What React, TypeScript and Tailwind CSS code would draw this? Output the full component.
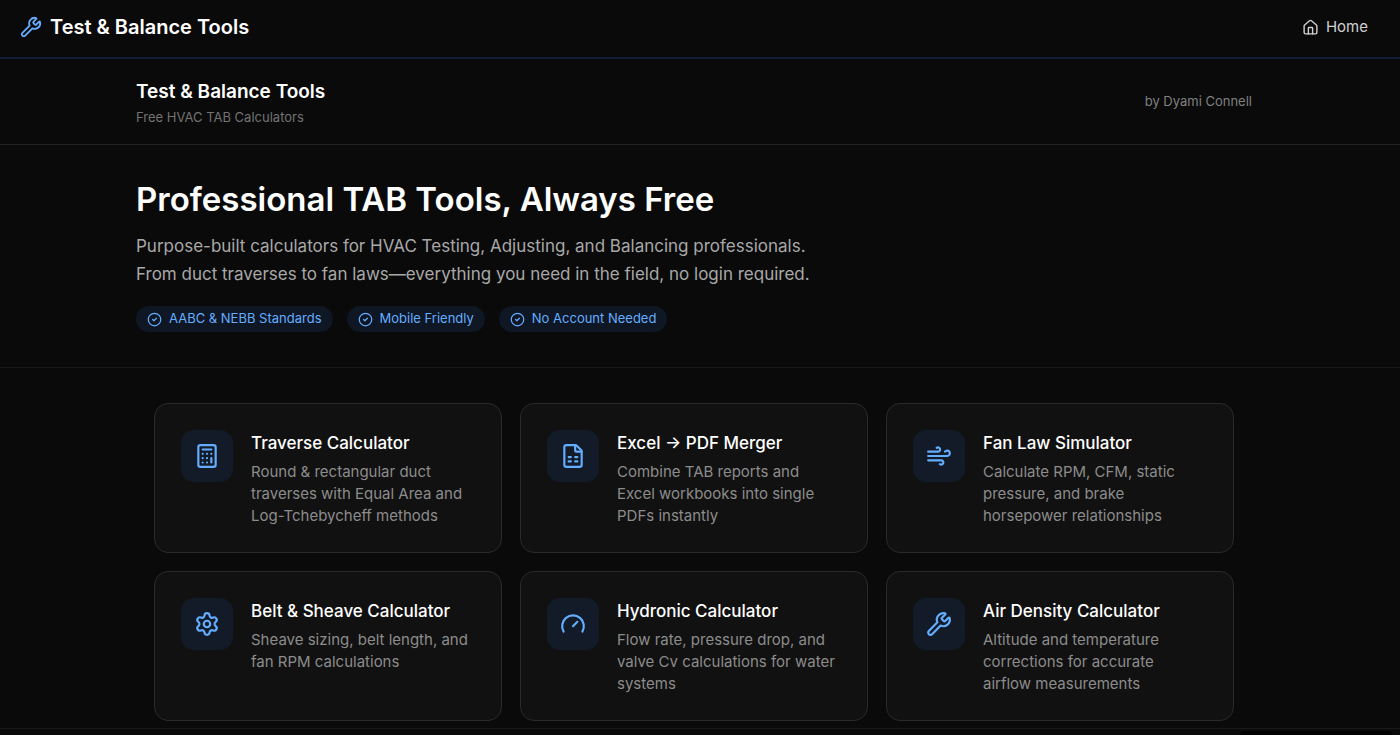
import {
  Calculator,
  CircleCheck,
  FileSpreadsheet,
  Gauge,
  House,
  Settings,
  Wind,
  Wrench,
  type LucideIcon,
} from 'lucide-react';

interface Tool {
  title: string;
  description: string;
  href: string;
  icon: LucideIcon;
}

const tools: Tool[] = [
  {
    title: 'Traverse Calculator',
    description: 'Round & rectangular duct traverses with Equal Area and Log-Tchebycheff methods',
    href: '#traverse',
    icon: Calculator,
  },
  {
    title: 'Excel → PDF Merger',
    description: 'Combine TAB reports and Excel workbooks into single PDFs instantly',
    href: '#merger',
    icon: FileSpreadsheet,
  },
  {
    title: 'Fan Law Simulator',
    description: 'Calculate RPM, CFM, static pressure, and brake horsepower relationships',
    href: '#fan-laws',
    icon: Wind,
  },
  {
    title: 'Belt & Sheave Calculator',
    description: 'Sheave sizing, belt length, and fan RPM calculations',
    href: '#belt-sheave',
    icon: Settings,
  },
  {
    title: 'Hydronic Calculator',
    description: 'Flow rate, pressure drop, and valve Cv calculations for water systems',
    href: '#hydronic',
    icon: Gauge,
  },
  {
    title: 'Air Density Calculator',
    description: 'Altitude and temperature corrections for accurate airflow measurements',
    href: '#air-density',
    icon: Wrench,
  },
];

const highlights = ['AABC & NEBB Standards', 'Mobile Friendly', 'No Account Needed'];

const NavBar = () => (
  <nav className="flex h-[59px] items-center justify-between border-b-2 border-[#121c38] pl-5 pr-8 pb-[3px]">
    <a href="#top" className="flex items-center gap-2 text-xl font-semibold text-white">
      <Wrench className="size-[22px] text-[#64aeff]" />
      Test &amp; Balance Tools
    </a>
    <a href="#home" className="flex items-center gap-[7px] text-[15px] text-[#d0d0d0] hover:text-white">
      <House className="size-[17px]" />
      Home
    </a>
  </nav>
);

const SiteHeader = () => (
  <header className="border-b border-[#222222] pr-3">
    <div className="mx-auto flex max-w-[1116px] items-center justify-between pt-[19px] pb-[18px]">
      <div>
        <p className="text-[19px] leading-7 font-semibold text-white">Test &amp; Balance Tools</p>
        <p className="mt-0.5 text-[13px] leading-[18px] text-[#737373]">Free HVAC TAB Calculators</p>
      </div>
      <span className="text-[13px] text-[#808080]">by Dyami Connell</span>
    </div>
  </header>
);

const Hero = () => (
  <section className="border-b border-[#1a1a1a] pr-3">
    <div className="mx-auto max-w-[1116px] pt-[34px] pb-[35px]">
      <h1 className="text-[33px] leading-10 font-semibold text-white">Professional TAB Tools, Always Free</h1>
      <p className="mt-[13px] max-w-[700px] text-[17px] leading-7 text-[#a8a8a8]">
        Purpose-built calculators for HVAC Testing, Adjusting, and Balancing professionals. From duct traverses to fan
        laws—everything you need in the field, no login required.
      </p>
      <ul className="mt-[18px] flex flex-wrap gap-[14px]">
        {highlights.map((label) => (
          <li
            key={label}
            className="flex h-[26px] items-center gap-[7px] rounded-full bg-[#0f1624] px-[11px] text-[13px] text-[#64aeff]"
          >
            <CircleCheck className="size-[15px]" />
            {label}
          </li>
        ))}
      </ul>
    </div>
  </section>
);

const ToolCard = ({ title, description, href, icon: Icon }: Tool) => (
  <a
    href={href}
    className="flex items-start gap-[18px] rounded-[14px] border border-[#2a2a2a] bg-[#111111] px-[26px] pt-[26px] pb-[25px] hover:border-[#3a3a3a]"
  >
    <span className="flex size-[52px] shrink-0 items-center justify-center rounded-[13px] bg-[#131b28]">
      <Icon className="size-[26px] text-[#64aeff]" />
    </span>
    <div className="pr-1">
      <h2 className="mb-[5px] text-[17px] leading-[26px] font-medium text-white">{title}</h2>
      <p className="text-[15px] leading-[22px] text-[#8c8c8c]">{description}</p>
    </div>
  </a>
);

const App = () => (
  <div className="min-h-screen bg-[#0a0a0a] font-['Inter',sans-serif]">
    <NavBar />
    <SiteHeader />
    <main>
      <Hero />
      <section className="pr-3">
        <div className="mx-auto grid max-w-[1080px] grid-cols-1 gap-[18px] pt-[35px] pb-[7px] md:grid-cols-2 lg:grid-cols-3">
          {tools.map((tool) => (
            <ToolCard key={tool.title} {...tool} />
          ))}
        </div>
      </section>
    </main>
    <footer className="border-t border-[#1a1a1a]" />
    {/* top edge of the collapsed corner panel */}
    <div className="fixed right-2 bottom-0 h-1 w-[152px] rounded-t bg-black" />
  </div>
);

export default App;
